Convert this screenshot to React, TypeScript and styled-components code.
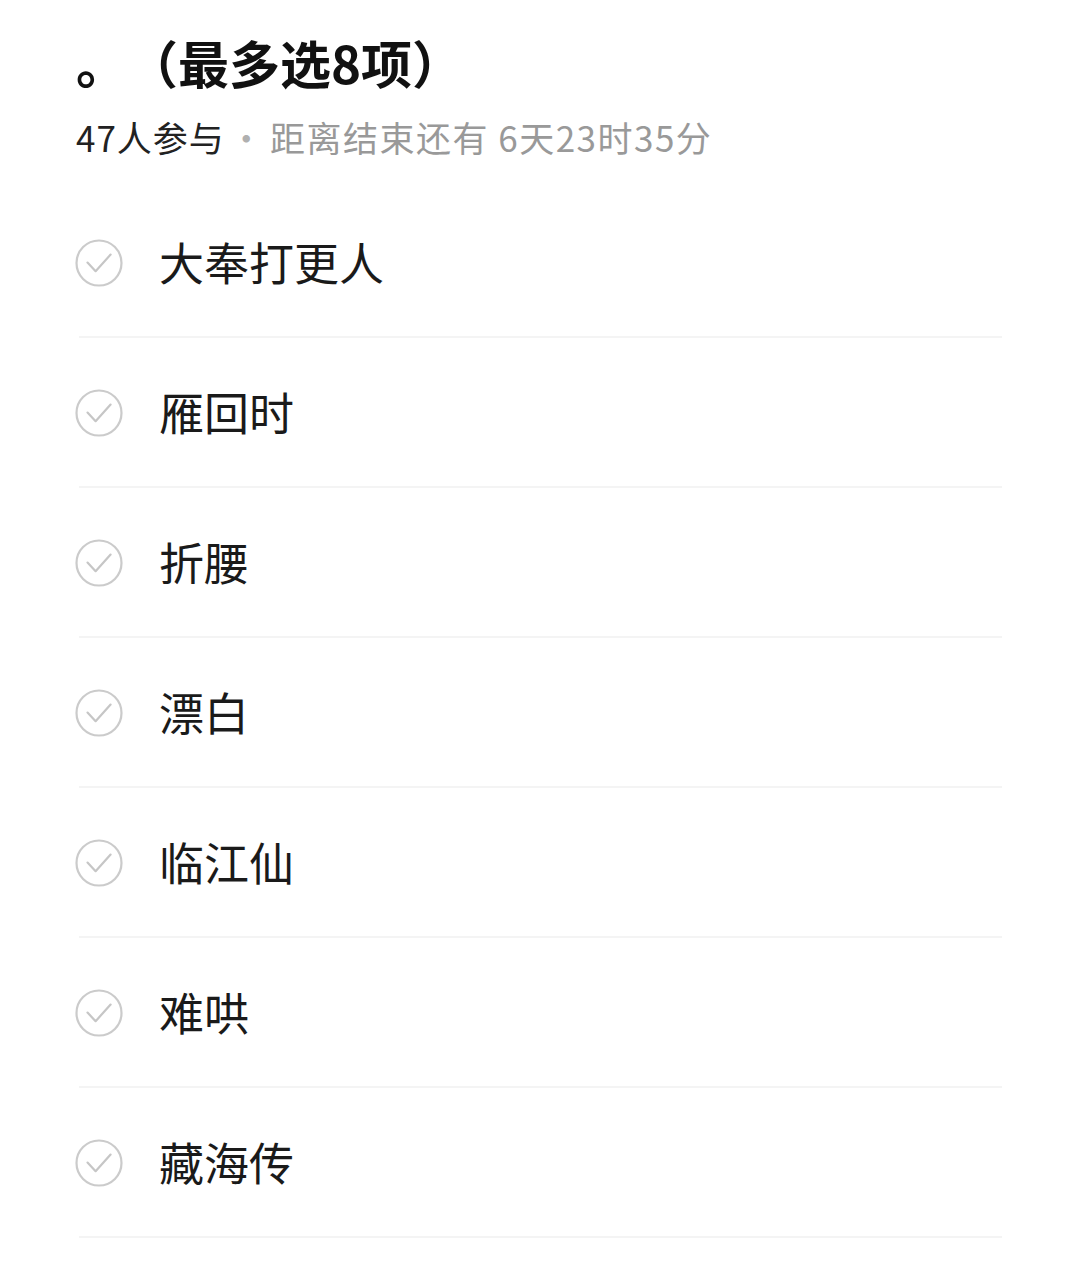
import styled, { createGlobalStyle } from 'styled-components';

const options = ['大奉打更人', '雁回时', '折腰', '漂白', '临江仙', '难哄', '藏海传'];

const GlobalStyle = createGlobalStyle`
    html, body {
        margin: 0;
        padding: 0;
        background: #ffffff;
    }
    body {
        font-family: "Noto Sans CJK SC", "Noto Sans", sans-serif;
        text-spacing-trim: space-all;
    }
`;

const CheckCircle = () => (
    <svg width="48" height="48" viewBox="0 0 48 48" fill="none">
        <circle cx="24" cy="24" r="22.5" stroke="#cbcbcb" strokeWidth="2.2" />
        <path
            d="M12.5 23.6 L20.6 32.2 L35.6 15.6"
            stroke="#c6c6c6"
            strokeWidth="2.2"
            strokeLinecap="round"
            strokeLinejoin="round"
        />
    </svg>
);

const App = () => {
    return (
        <>
            <GlobalStyle />
            <Page>
                <Title>。（最多选8项）</Title>
                <Meta>
                    <Count>47人参与</Count>
                    <Dot>·</Dot>
                    <Remain>距离结束还有 6天23时35分</Remain>
                </Meta>
                <OptionList>
                    {options.map(name => (
                        <Option key={name}>
                            <IconBox>
                                <CheckCircle />
                            </IconBox>
                            <Label>{name}</Label>
                        </Option>
                    ))}
                </OptionList>
            </Page>
        </>
    );
};

export default App;

const Page = styled.div`
    width: 1079px;
    min-height: 1264px;
    box-sizing: border-box;
    padding: 26px 77px 0 76px;
    background: #fff;
`;

const Title = styled.h1`
    margin: 0;
    font-size: 51px;
    font-weight: 700;
    line-height: 72px;
    color: #111;
    text-spacing-trim: space-all;
    font-feature-settings: "halt" 0, "chws" 0;
`;

const Meta = styled.div`
    margin-top: 15px;
    display: flex;
    align-items: center;
    font-size: 35px;
    line-height: 48px;
    white-space: pre;
`;

const Count = styled.span`
    color: #222;
    letter-spacing: 1px;
`;

const Dot = styled.span`
    color: #b0b0b0;
    margin: 0 6px 0 4px;
`;

const Remain = styled.span`
    color: #999;
    letter-spacing: 1.5px;
`;

const OptionList = styled.div`
    margin-top: 27px;
    display: flex;
    flex-direction: column;
`;

const Option = styled.div`
    height: 150px;
    margin-left: 3px;
    box-sizing: border-box;
    display: flex;
    align-items: center;
    border-bottom: 2px solid #f4f4f4;
`;

const IconBox = styled.div`
    width: 48px;
    height: 48px;
    margin-left: -4px;
    margin-top: 2px;
    flex-shrink: 0;
`;

const Label = styled.span`
    margin-left: 36px;
    font-size: 45px;
    line-height: 60px;
    color: #1a1a1a;
`;
